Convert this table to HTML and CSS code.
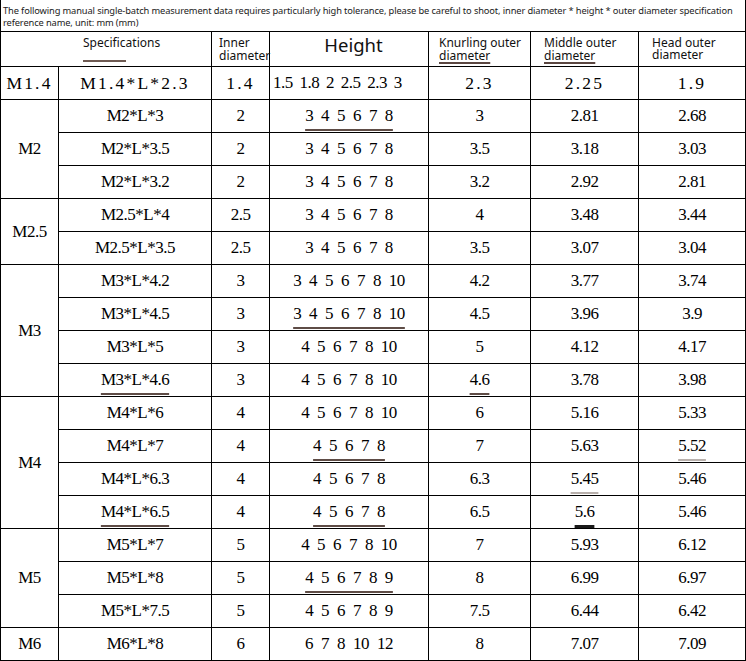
FILE: index.html
```html
<!DOCTYPE html>
<html>
<head>
<meta charset="utf-8">
<link rel="stylesheet" href="styles.css">
</head>
<body>
<table class="sheet">
  <colgroup>
    <col class="c1"><col class="c2"><col class="c3"><col class="c4"><col class="c5"><col class="c6"><col class="c7">
  </colgroup>
  <tr class="note">
    <td colspan="7">The following manual single-batch measurement data requires particularly high tolerance, please be careful to shoot, inner diameter * height * outer diameter specification<br>reference name, unit: mm (mm)</td>
  </tr>
  <tr class="head">
    <th colspan="2" class="h-spec"><div class="spec-label">Specifications</div><div class="mark"></div></th>
    <th class="h-inner">Inner diameter</th>
    <th class="h-height"><div class="height-label">Height</div></th>
    <th class="h-knurl">Knurling outer <span class="hul">diameter</span></th>
    <th class="h-mid">Middle outer <span class="hul">diameter</span></th>
    <th class="h-head">Head outer diameter</th>
  </tr>
  <tr class="r first">
    <td class="wide">M1.4</td><td class="wide">M1.4*L*2.3</td><td class="wide">1.4</td><td class="hleft">1.5 1.8 2 2.5 2.3 3</td><td class="wide">2.3</td><td class="wide">2.25</td><td class="wide">1.9</td>
  </tr>
  <tr class="r">
    <td rowspan="3">M2</td><td>M2*L*3</td><td>2</td><td><span class="ul">3 4 5 6 7 8</span></td><td>3</td><td>2.81</td><td>2.68</td>
  </tr>
  <tr class="r">
    <td>M2*L*3.5</td><td>2</td><td>3 4 5 6 7 8</td><td>3.5</td><td>3.18</td><td>3.03</td>
  </tr>
  <tr class="r">
    <td>M2*L*3.2</td><td>2</td><td>3 4 5 6 7 8</td><td>3.2</td><td>2.92</td><td>2.81</td>
  </tr>
  <tr class="r">
    <td rowspan="2">M2.5</td><td>M2.5*L*4</td><td>2.5</td><td>3 4 5 6 7 8</td><td>4</td><td>3.48</td><td>3.44</td>
  </tr>
  <tr class="r">
    <td>M2.5*L*3.5</td><td>2.5</td><td>3 4 5 6 7 8</td><td>3.5</td><td>3.07</td><td>3.04</td>
  </tr>
  <tr class="r">
    <td rowspan="4">M3</td><td>M3*L*4.2</td><td>3</td><td>3 4 5 6 7 8 10</td><td>4.2</td><td>3.77</td><td>3.74</td>
  </tr>
  <tr class="r">
    <td>M3*L*4.5</td><td>3</td><td><span class="ul">3 4 5 6 7 8 10</span></td><td>4.5</td><td>3.96</td><td>3.9</td>
  </tr>
  <tr class="r">
    <td>M3*L*5</td><td>3</td><td>4 5 6 7 8 10</td><td>5</td><td>4.12</td><td>4.17</td>
  </tr>
  <tr class="r">
    <td><span class="ul">M3*L*4.6</span></td><td>3</td><td>4 5 6 7 8 10</td><td><span class="ul">4.6</span></td><td>3.78</td><td>3.98</td>
  </tr>
  <tr class="r">
    <td rowspan="4">M4</td><td>M4*L*6</td><td>4</td><td>4 5 6 7 8 10</td><td>6</td><td>5.16</td><td>5.33</td>
  </tr>
  <tr class="r">
    <td>M4*L*7</td><td>4</td><td><span class="ul">4 5 6 7 8</span></td><td>7</td><td>5.63</td><td><span class="ul faint">5.52</span></td>
  </tr>
  <tr class="r">
    <td>M4*L*6.3</td><td>4</td><td>4 5 6 7 8</td><td>6.3</td><td><span class="ul faint">5.45</span></td><td>5.46</td>
  </tr>
  <tr class="r">
    <td><span class="ul">M4*L*6.5</span></td><td>4</td><td><span class="ul">4 5 6 7 8</span></td><td>6.5</td><td><span class="ul dark">5.6</span></td><td>5.46</td>
  </tr>
  <tr class="r">
    <td rowspan="3">M5</td><td>M5*L*7</td><td>5</td><td>4 5 6 7 8 10</td><td>7</td><td>5.93</td><td>6.12</td>
  </tr>
  <tr class="r">
    <td>M5*L*8</td><td>5</td><td><span class="ul">4 5 6 7 8 9</span></td><td>8</td><td>6.99</td><td>6.97</td>
  </tr>
  <tr class="r">
    <td>M5*L*7.5</td><td>5</td><td>4 5 6 7 8 9</td><td>7.5</td><td>6.44</td><td>6.42</td>
  </tr>
  <tr class="r">
    <td>M6</td><td>M6*L*8</td><td>6</td><td>6 7 8 10 12</td><td>8</td><td>7.07</td><td>7.09</td>
  </tr>
</table>
</body>
</html>
```
FILE: styles.css
```css
html, body {
  margin: 0;
  padding: 0;
  background: #ffffff;
}

.sheet {
  border-collapse: collapse;
  table-layout: fixed;
  width: 746px;
  color: #000000;
}

.c1 { width: 58px; }
.c2 { width: 153px; }
.c3 { width: 58px; }
.c4 { width: 159px; }
.c5 { width: 102px; }
.c6 { width: 108px; }
.c7 { width: 107px; }

.sheet td,
.sheet th {
  border: 1px solid #000000;
  padding: 0;
  text-align: center;
  vertical-align: middle;
  font-weight: normal;
}

.sheet .note td {
  height: 26px;
  border-top: none;
  font-family: "Noto Sans", sans-serif;
  font-size: 9.3px;
  letter-spacing: -0.12px;
  line-height: 11.5px;
  text-align: left;
  vertical-align: top;
  padding: 5px 0 0 2px;
  white-space: nowrap;
  color: #1a1a1a;
}

.sheet .head th {
  height: 34px;
  font-family: "Noto Sans", sans-serif;
  font-size: 12px;
  line-height: 13px;
  text-align: left;
  color: #111111;
}

.sheet .head .h-spec {
  vertical-align: top;
  padding-left: 82px;
}

.spec-label {
  margin-top: 4px;
}

.mark {
  width: 43px;
  height: 2px;
  margin-top: 11px;
  background: #6e5a52;
}

.sheet .head .h-inner { padding-left: 7px; }
.sheet .head .h-knurl { padding-left: 10px; }
.sheet .head .h-mid { padding-left: 13px; }
.sheet .head .h-head { padding-left: 13px; line-height: 12px; }

.sheet .head .h-height {
  text-align: center;
  vertical-align: top;
  padding-left: 9px;
  font-size: 18.5px;
  line-height: 22px;
}

.height-label {
  margin-top: 2px;
}

.hul {
  text-decoration: underline;
  text-decoration-color: #5a4640;
  text-decoration-thickness: 2px;
  text-underline-offset: 2px;
}

.r td {
  height: 32px;
  font-family: "Liberation Serif", serif;
  font-size: 17px;
  letter-spacing: -0.5px;
  word-spacing: 4.2px;
  white-space: nowrap;
}

.first .wide {
  font-size: 17.5px;
  letter-spacing: 2.2px;
}

.sheet .first .hleft {
  text-align: left;
  padding-left: 3px;
  word-spacing: 3px;
}

.ul {
  text-decoration: underline;
  text-decoration-color: #5e4c46;
  text-decoration-thickness: 2px;
  text-underline-offset: 8px;
}

.ul.faint {
  text-decoration-color: #b8b0ac;
}

.ul.dark {
  text-decoration-color: #1a1a1a;
  text-decoration-thickness: 3px;
}
```
